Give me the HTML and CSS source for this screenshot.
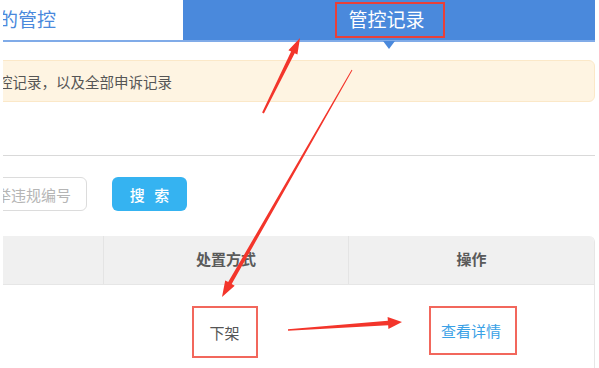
FILE: index.html
```html
<!DOCTYPE html>
<html lang="zh-CN">
<head>
<meta charset="utf-8">
<title>管控记录</title>
<link rel="stylesheet" href="styles.css">
</head>
<body>
<div class="page">
  <div class="tabs">
    <div class="tab tab-plain"><span class="tab-text">的管控</span></div>
    <div class="tab tab-active"><span class="tab-mark">管控记录</span><i class="caret"></i></div>
  </div>
  <div class="notice"><span class="notice-text">控记录，以及全部申诉记录</span></div>
  <div class="divider"></div>
  <div class="search">
    <input class="search-input" type="text" placeholder="举违规编号">
    <button class="search-btn">搜 索</button>
  </div>
  <div class="table">
    <div class="row head">
      <div class="cell c1"></div>
      <div class="cell c2">处置方式</div>
      <div class="cell c3">操作</div>
    </div>
    <div class="row body">
      <div class="cell c1"></div>
      <div class="cell c2"><span class="mark mark-a">下架</span></div>
      <div class="cell c3"><span class="mark mark-b link">查看详情</span></div>
    </div>
  </div>
</div>
<svg class="arrows" width="599" height="368" viewBox="0 0 599 368">
  <polygon fill="#f3352b" points="262.1,112.6 291.1,51.5 288.4,50.2 300,38 297.4,54.6 294.7,53.3 263.9,113.4"/>
  <polygon fill="#f3352b" points="352.4,70.2 231.7,284.1 234.7,285.8 222,297 225.2,280.4 228.2,282.1 351.6,69.8"/>
  <polygon fill="#f3352b" points="288.06,330.8 388.15,325.2 388.4,329 402,322 387.6,317 387.85,320.8 287.94,329.2"/>
</svg>
</body>
</html>
```
FILE: styles.css
```css
html, body {
  margin: 0;
  padding: 0;
  background: #fff;
}
body {
  width: 599px;
  height: 368px;
  overflow: hidden;
  position: relative;
  font-family: "Noto Sans CJK SC", "Noto Sans", sans-serif;
  color: #555;
}
.page {
  margin-left: 3px;
  width: 592px;
  overflow: hidden;
  height: 368px;
}
.tabs {
  display: flex;
  height: 40px;
  border-bottom: 2px solid #80abe8;
}
.tab {
  height: 40px;
  display: flex;
  align-items: center;
  font-size: 19px;
}
.tab-plain {
  width: 180px;
  color: #4a89dc;
}
.tab-text {
  margin-left: -4px;
  margin-top: -4px;
}
.tab-active {
  flex: 1;
  background: #4a89dc;
  color: #fff;
  justify-content: center;
  position: relative;
}
.tab-mark {
  border: 2px solid #e8403a;
  height: 32px;
  line-height: 30px;
  padding: 0 18px 0 11px;
  margin-left: 2px;
}
.caret {
  position: absolute;
  left: 200px;
  bottom: -9px;
  width: 0;
  height: 0;
  border-left: 6px solid transparent;
  border-right: 6px solid transparent;
  border-top: 8px solid #4a89dc;
}
.notice {
  margin-top: 18px;
  height: 40px;
  background: #fef4e2;
  border: 1px solid #fbe8c8;
  border-radius: 6px;
  margin-left: -10px;
  display: flex;
  align-items: center;
  font-size: 14.5px;
  color: #555;
}
.notice-text {
  margin-left: 4px;
}
.divider {
  margin-top: 53px;
  height: 1px;
  background: #d9d9d9;
}
.search {
  margin-top: 21px;
  display: flex;
  align-items: center;
}
.search-input {
  margin-left: -23px;
  width: 107px;
  height: 34px;
  box-sizing: border-box;
  border: 1px solid #dcdcdc;
  border-radius: 6px;
  padding: 0 0 0 15px;
  font-family: inherit;
  font-size: 15px;
  outline: none;
}
.search-input::placeholder {
  color: #b5b5b5;
}
.search-btn {
  margin-left: 25px;
  width: 75px;
  height: 34px;
  border: none;
  border-radius: 6px;
  background: #35b3f1;
  color: #fff;
  font-family: inherit;
  font-size: 15px;
  font-weight: 500;
  letter-spacing: 3px;
  padding: 0 0 0 3px;
}
.table {
  margin-top: 25px;
  border-right: 1px solid #e6e6e6;
  border-top-right-radius: 6px;
  overflow: hidden;
}
.row {
  display: flex;
}
.head {
  height: 49px;
  background: #f0f0f0;
  font-weight: 700;
  font-size: 15px;
  color: #5a5a5a;
  border-bottom: 1px solid #e6e6e6;
  box-sizing: border-box;
}
.body {
  height: 94px;
  font-size: 15px;
}
.cell {
  display: flex;
  align-items: center;
  justify-content: center;
  box-sizing: border-box;
}
.c1 { width: 100px; }
.c2 { width: 245px; }
.c3 { flex: 1; }
.head .c2, .head .c3 {
  border-left: 1px solid #e4e4e4;
}
.head .cell {
  padding-bottom: 4px;
}
.mark {
  border: 2px solid #f2675c;
  display: inline-flex;
  align-items: center;
  justify-content: center;
  box-sizing: border-box;
}
.mark-a {
  width: 66px;
  height: 52px;
  margin-top: 0;
  margin-left: -2px;
}
.mark-b {
  width: 88px;
  height: 49px;
  margin-top: -3px;
  padding-right: 4px;
  margin-left: 4px;
}
.link {
  color: #3aa1e6;
}
.arrows {
  position: absolute;
  top: 0;
  left: 0;
  pointer-events: none;
}
```
